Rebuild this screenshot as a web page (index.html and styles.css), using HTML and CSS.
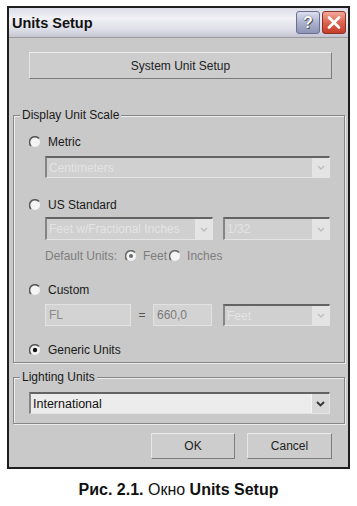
FILE: index.html
```html
<!DOCTYPE html>
<html lang="en">
<head>
<meta charset="utf-8">
<title>Units Setup</title>
<link rel="stylesheet" href="styles.css">
</head>
<body>

<div class="page">

	<div class="dialog">

		<div class="titlebar">
			<div class="title">Units Setup</div>
			<div class="caption-buttons">
				<div class="cap-btn help">?</div>
				<div class="cap-btn close">
					<svg width="14" height="13" viewBox="0 0 14 13"><path d="M2 1.5 L12 11.5 M12 1.5 L2 11.5" stroke="#fff" stroke-width="2.6" stroke-linecap="round"/></svg>
				</div>
			</div>
		</div>

		<div class="btn system">System Unit Setup</div>

		<fieldset class="group scale">
			<legend>Display Unit Scale</legend>

			<div class="row metric">
				<svg class="radio" viewBox="0 0 12 12"><circle cx="6" cy="6" r="5" fill="#f4f4f4"/><path d="M10 2.4 A5 5 0 0 0 2 10" stroke="#5a5a5a" stroke-width="1.6" fill="none"/></svg>
				<span>Metric</span>
			</div>
			<div class="combo off indent wide"><span class="value">Centimeters</span><span class="drop"><svg width="8" height="5" viewBox="0 0 8 5"><path d="M1 1 L4 4 L7 1" stroke="#bdbdbd" stroke-width="1.4" fill="none"/></svg></span></div>

			<div class="row us">
				<svg class="radio" viewBox="0 0 12 12"><circle cx="6" cy="6" r="5" fill="#f4f4f4"/><path d="M10 2.4 A5 5 0 0 0 2 10" stroke="#5a5a5a" stroke-width="1.6" fill="none"/></svg>
				<span>US Standard</span>
			</div>
			<div class="fields indent us-fields">
				<div class="combo off frac"><span class="value">Feet w/Fractional Inches</span><span class="drop"><svg width="8" height="5" viewBox="0 0 8 5"><path d="M1 1 L4 4 L7 1" stroke="#bdbdbd" stroke-width="1.4" fill="none"/></svg></span></div>
				<div class="combo off small"><span class="value">1/32</span><span class="drop"><svg width="8" height="5" viewBox="0 0 8 5"><path d="M1 1 L4 4 L7 1" stroke="#bdbdbd" stroke-width="1.4" fill="none"/></svg></span></div>
			</div>
			<div class="row defaults indent">
				<span class="muted">Default Units:</span>
				<svg class="radio" viewBox="0 0 12 12"><circle cx="6" cy="6" r="5" fill="#f4f4f4"/><path d="M10 2.4 A5 5 0 0 0 2 10" stroke="#6a6a6a" stroke-width="1.6" fill="none"/><circle cx="6" cy="6" r="2" fill="#6a6a6a"/></svg>
				<span class="muted">Feet</span>
				<svg class="radio" viewBox="0 0 12 12"><circle cx="6" cy="6" r="5" fill="#f4f4f4"/><path d="M10 2.4 A5 5 0 0 0 2 10" stroke="#6a6a6a" stroke-width="1.6" fill="none"/></svg>
				<span class="muted">Inches</span>
			</div>

			<div class="row custom">
				<svg class="radio" viewBox="0 0 12 12"><circle cx="6" cy="6" r="5" fill="#f4f4f4"/><path d="M10 2.4 A5 5 0 0 0 2 10" stroke="#5a5a5a" stroke-width="1.6" fill="none"/></svg>
				<span>Custom</span>
			</div>
			<div class="fields indent custom-fields">
				<div class="field name">FL</div>
				<span class="equals">=</span>
				<div class="field amount">660,0</div>
				<div class="combo off small"><span class="value">Feet</span><span class="drop"><svg width="8" height="5" viewBox="0 0 8 5"><path d="M1 1 L4 4 L7 1" stroke="#bdbdbd" stroke-width="1.4" fill="none"/></svg></span></div>
			</div>

			<div class="row generic">
				<svg class="radio" viewBox="0 0 12 12"><circle cx="6" cy="6" r="5" fill="#f4f4f4"/><path d="M10 2.4 A5 5 0 0 0 2 10" stroke="#5a5a5a" stroke-width="1.6" fill="none"/><circle cx="6" cy="6" r="2.2" fill="#111"/></svg>
				<span>Generic Units</span>
			</div>
		</fieldset>

		<fieldset class="group lighting">
			<legend>Lighting Units</legend>
			<div class="combo on full"><span class="value">International</span><span class="drop"><svg width="9" height="6" viewBox="0 0 9 6"><path d="M1 1 L4.5 4.5 L8 1" stroke="#333" stroke-width="1.8" fill="none"/></svg></span></div>
		</fieldset>

		<div class="actions">
			<div class="btn ok">OK</div>
			<div class="btn cancel">Cancel</div>
		</div>

	</div>

	<p class="figure"><b>Рис. 2.1.</b> Окно <b>Units Setup</b></p>

</div>

</body>
</html>
```

FILE: styles.css
```css
html, body {
	margin: 0;
	background: #ffffff;
	font-family: "Liberation Sans", Arial, sans-serif;
}

.page {
	padding: 6px 0 0 7px;
}

.dialog {
	width: 343px;
	box-sizing: border-box;
	border: 2px solid #1e1e1e;
	background: #c9c9c9;
	padding-bottom: 8px;
	font-size: 12px;
	color: #1a1a1a;
}

/* title bar */

.titlebar {
	height: 29px;
	display: flex;
	align-items: center;
	justify-content: space-between;
	background: linear-gradient(to bottom, #dcdce8 0%, #f1f1f6 35%, #dddde8 75%, #c5c5d2 100%);
	border-bottom: 1px solid #9c9c9c;
}

.title {
	padding-left: 3px;
	font-size: 14.5px;
	font-weight: bold;
	color: #111111;
}

.caption-buttons {
	display: flex;
	gap: 2px;
	padding-right: 2px;
}

.cap-btn {
	width: 24px;
	height: 23px;
	box-sizing: border-box;
	border-radius: 3px;
	display: flex;
	align-items: center;
	justify-content: center;
}

.cap-btn.help {
	background: linear-gradient(to bottom, #dcdff0, #a9aecb 55%, #8e94b6);
	border: 1px solid #6b7090;
	color: #ffffff;
	font-size: 16px;
	font-weight: bold;
	text-shadow: 0 0 1px #333, 1px 1px 0 #555;
}

.cap-btn.close {
	background: linear-gradient(to bottom, #f2aa9c, #dc6450 50%, #c53d2b);
	border: 1px solid #8c3324;
}

/* buttons */

.btn {
	box-sizing: border-box;
	display: flex;
	align-items: center;
	justify-content: center;
	background: #cdcdcd;
	border: 1px solid;
	border-color: #ececec #7c7c7c #7c7c7c #e6e6e6;
	color: #222222;
	font-size: 12px;
}

.btn.system {
	height: 27px;
	margin: 14px 16px 0 20px;
}

.actions {
	display: flex;
	justify-content: flex-end;
	gap: 12px;
	margin: 9px 16px 0 0;
}

.actions .btn {
	height: 26px;
}

.btn.ok {
	width: 84px;
}

.btn.cancel {
	width: 85px;
}

/* group boxes */

.group {
	margin: 0 3px 0 4px;
	padding: 0 0 4px 15px;
	border: 1px solid #868686;
	box-shadow: inset 1px 1px 0 #ededed, 1px 1px 0 #ededed;
	min-width: 0;
}

.group legend {
	margin-left: -9px;
	padding: 0 2px;
	font-size: 12px;
	line-height: 14px;
	background: #c9c9c9;
}

.group.scale {
	margin-top: 29px;
}

.group.lighting {
	margin-top: 7px;
	padding-bottom: 9px;
}

.row {
	height: 16px;
	display: flex;
	align-items: center;
}

.radio {
	width: 12px;
	height: 12px;
	margin-right: 7px;
	flex: none;
}

.row.metric { margin-top: 12px; }
.row.us { margin-top: 19px; }
.row.defaults { margin-top: 8px; }
.row.custom { margin-top: 18px; }
.row.generic { margin-top: 16px; }

.indent {
	margin-left: 16px;
}

.muted {
	color: #7e7e7e;
}

.row.defaults .muted:first-child {
	margin-right: 8px;
}

.row.defaults .radio {
	margin-right: 6px;
}

.row.defaults .muted:nth-of-type(2) {
	margin-right: 2px;
}

/* combo boxes and fields */

.combo {
	box-sizing: border-box;
	height: 22px;
	display: flex;
	align-items: center;
	border-style: solid;
	border-width: 2px 1px 1px 2px;
	border-color: #636363 #e4e4e4 #e4e4e4 #858585;
}

.combo .value {
	flex: 1;
	padding-left: 2px;
	white-space: nowrap;
	overflow: hidden;
}

.combo .drop {
	width: 17px;
	align-self: stretch;
	display: flex;
	align-items: center;
	justify-content: center;
}

.combo.off {
	background: #d0d0d0;
	color: #e3e3e3;
}

.combo.off .drop {
	background: #e4e4e4;
}

.combo.on {
	background: #ececec;
	color: #111111;
	font-size: 12.5px;
}

.combo.on .drop {
	background: #d9d9d9;
	border-left: 1px solid #f4f4f4;
}

.combo.wide {
	width: 285px;
	margin-top: 6px;
}

.combo.full {
	width: 301px;
	margin-top: 8px;
}

.fields {
	display: flex;
	align-items: center;
}

.us-fields {
	margin-top: 4px;
}

.us-fields .combo {
	height: 23px;
}

.combo.frac {
	width: 168px;
}

.combo.small {
	width: 107px;
	margin-left: auto;
	margin-right: 14px;
}

.custom-fields {
	margin-top: 6px;
}

.field {
	box-sizing: border-box;
	height: 22px;
	display: flex;
	align-items: center;
	padding-left: 3px;
	background: #d3d3d3;
	border: 1px solid #e2e2e2;
	color: #8a8a8a;
}

.field.name {
	width: 86px;
}

.field.amount {
	width: 59px;
	color: #7a7a7a;
}

.equals {
	width: 22px;
	text-align: center;
	color: #555555;
}

/* figure caption */

.figure {
	margin: 12px 7px 0 0;
	text-align: center;
	font-size: 16px;
	line-height: 18px;
	color: #111111;
}
```
